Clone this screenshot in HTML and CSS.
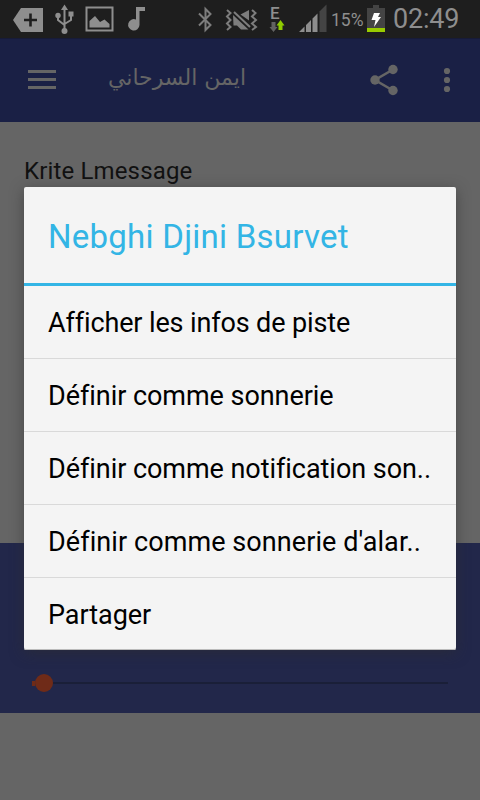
FILE: index.html
```html
<!DOCTYPE html>
<html lang="fr">
<head>
<meta charset="utf-8">
<title>Player</title>
<link rel="stylesheet" href="styles.css">
</head>
<body>
<div class="screen">
  <header class="status">
    <svg class="status-icons" width="330" height="38" viewBox="0 0 330 38" fill="#8e8e8e">
      <path d="M21 8H43V32H21L13 20Z"/>
      <path d="M30.500 13.500V26.500M24 20H37" stroke="#1e1e1e" stroke-width="2.600"/>
      <g stroke="#8e8e8e" stroke-width="2" fill="none"><path d="M64.500 9V31M58 16V20L64.500 25M71 14V20L64.500 24"/></g>
      <path d="M64.500 4.500L68 10H61Z"/><circle cx="58" cy="15.500" r="2.700"/><path d="M68.500 11.500H73.500V16.500H68.500Z"/><circle cx="64.500" cy="31" r="3"/>
      <path d="M86.500 7.500H112.500V30.500H86.500Z" fill="none" stroke="#8e8e8e" stroke-width="2"/>
      <path d="M89.500 27.500V21L95 16L100 22L104.500 19.500L109.500 24V27.500Z"/>
      <path d="M136 7H145V11H139.500V25A5.700 5.700 0 1 1 136 19.500Z"/>
      <path d="M199 13.500L210.500 25L205.500 30V9L210.500 14L199 25.500" fill="none" stroke="#7d7d7d" stroke-width="2"/>
      <g fill="#7d7d7d"><path d="M233 15L248.500 29.500H241L237 25.500H233.500Z"/><path d="M240.500 14.500L249 10V20.500Z"/></g>
      <path d="M234 12L250 27" stroke="#7d7d7d" stroke-width="2"/>
      <g fill="none" stroke="#7d7d7d" stroke-width="2"><path d="M227 10L230.500 13L227 16.500L230.500 20L227 23.500L230.500 27L227 30M252 10L255.500 13L252 16.500L256 20L252 23.500L256 27L252 30"/></g>
      <path d="M271.500 22H275.500V27H277.500L273.500 32L269.500 27H271.500Z" fill="#626262"/>
      <path d="M278.500 30H282.500V25.500H284.500L280.500 20L276.500 25.500H278.500Z" fill="#8fcc00"/>
      <path d="M299 32L304.500 26.500V32ZM306 25L311 20V32H306ZM312.500 18.500L317.500 13.500V32H312.500Z" fill="#8e8e8e"/>
      <path d="M319.500 11.500L326.500 4.500V32H319.500Z" fill="#444"/>
    </svg>
    <span class="network">E</span>
    <span class="percent">15%</span>
    <svg class="battery" width="18" height="28" viewBox="0 0 18 28"><path d="M6 1H12V4H18V24H0V4H6Z" fill="#444"/><path d="M0 24H18V28H0Z" fill="#99cc00"/><path d="M7 9H13L11 13H14L7 23L8.500 16H4.500Z" fill="#fff"/></svg>
    <span class="clock">02:49</span>
  </header>
  <div class="toolbar">
    <svg class="menu-icon" width="28" height="22" viewBox="0 0 28 22" fill="#656565"><path d="M0 1H28V4H0ZM0 9H28V12H0ZM0 17H28V20H0Z"/></svg>
    <h1 class="artist" dir="rtl" lang="ar">ايمن السرحاني</h1>
    <svg class="actions" width="90" height="36" viewBox="0 0 90 36" fill="#656565"><path d="M25 7.500L7 18L25 28.500" fill="none" stroke="#656565" stroke-width="2.600"/><circle cx="7" cy="18" r="4.700"/><circle cx="25" cy="7.500" r="4.700"/><circle cx="25" cy="28.500" r="4.700"/><circle cx="79" cy="9" r="3.100"/><circle cx="79" cy="18" r="3.100"/><circle cx="79" cy="27" r="3.100"/></svg>
  </div>
  <main class="content"><p class="track">Krite Lmessage</p></main>
  <section class="player">
    <div class="seek"><span class="played"></span><span class="thumb"></span></div>
  </section>
</div>
<section class="dialog" role="dialog">
  <h2 class="title">Nebghi Djini Bsurvet</h2>
  <ul class="options">
    <li class="o1">Afficher les infos de piste</li>
    <li class="o2">Définir comme sonnerie</li>
    <li class="o3">Définir comme notification son..</li>
    <li class="o4">Définir comme sonnerie d'alar..</li>
    <li class="o5">Partager</li>
  </ul>
</section>
</body>
</html>
```
FILE: styles.css
```css
* { box-sizing: border-box; margin: 0; padding: 0; }
body { width: 480px; height: 800px; overflow: hidden; background: #656565; font-family: Roboto, sans-serif; }
.screen { display: flex; flex-direction: column; height: 800px; }
.status { position: relative; display: flex; height: 38px; background: #1e1e1e; color: #8e8e8e; }
.status-icons { flex: none; }
.network { position: absolute; left: 270px; top: 5px; font-size: 17px; line-height: 17px; font-weight: 500; }
.percent { width: 37px; padding-left: 1px; font-size: 17.500px; line-height: 40px; white-space: nowrap; }
.battery { margin-top: 4px; flex: none; }
.clock { margin-left: 8px; font-size: 27px; line-height: 38px; letter-spacing: -.2px; }
.toolbar { display: flex; height: 84px; background: #1a2045; border-top: 1px solid #171b38; }
.menu-icon { margin: 30px 0 0 28px; flex: none; }
.artist { width: 137px; margin: 21px 0 0 53px; font: 400 22px/36px "DejaVu Sans", sans-serif; color: #656565; white-space: nowrap; }
.actions { margin: 23px 0 0 122px; flex: none; }
.content { height: 421px; padding: 34px 24px; }
.track { font-size: 24px; line-height: 30px; color: #111; letter-spacing: .15px; }
.player { height: 170px; background: #22274a; padding: 131px 32px 0; }
.seek { display: flex; align-items: center; height: 18px; background: linear-gradient(#1a1f38, #1a1f38) 0 8px / 100% 2px no-repeat; }
.played { width: 3px; height: 5px; background: #6f2b18; }
.thumb { width: 18px; height: 18px; border-radius: 50%; background: #6f2b18; }
.dialog { position: absolute; left: 24px; top: 187px; width: 432px; height: 463px; background: #f4f4f4; border-radius: 2px; box-shadow: 0 3px 14px rgba(45,45,45,.55), inset 0 -1px #bbb; }
.title { height: 99px; padding: 29px 24px 0; border-bottom: 3px solid #33b5e5; font-size: 33px; line-height: 42px; font-weight: 400; letter-spacing: .25px; color: #33b5e5; white-space: nowrap; }
.options { list-style: none; }
.options li { height: 73px; padding-left: 24px; border-bottom: 1px solid #d9d9d9; font-size: 27px; line-height: 74px; color: #000; white-space: nowrap; font-variant-ligatures: none; letter-spacing: -.05px; }
.options .o1 { letter-spacing: -.13px; }
.options .o4 { letter-spacing: .08px; }
.options li:last-child { border: 0; }
```
